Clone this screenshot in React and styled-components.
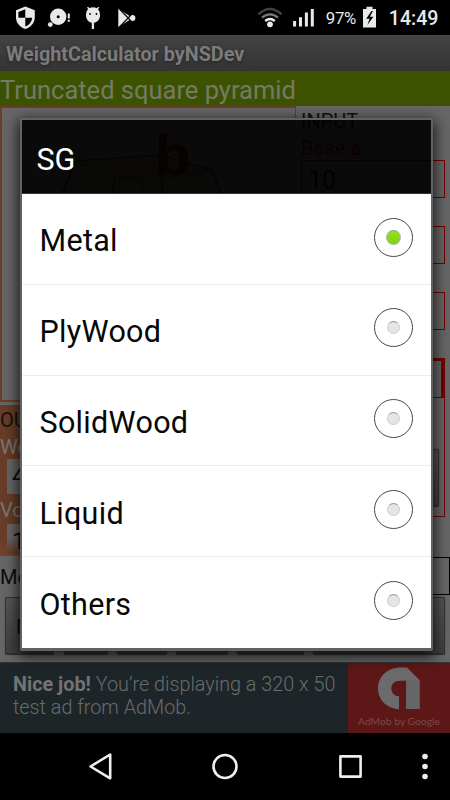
import React from 'react';
import styled, { createGlobalStyle } from 'styled-components';

const GlobalStyle = createGlobalStyle`
  *, *::before, *::after { box-sizing: border-box; }
  body { margin: 0; background: #000; font-family: Roboto, "Noto Sans", sans-serif; }
`;

const Screen = styled.div`
  position: relative;
  display: grid;
  grid-template-rows: 35px 36px 35px 556px 71px 67px;
  width: 450px;
  height: 800px;
  overflow: hidden;
  background: #000;
  white-space: nowrap;
`;

const StatusBar = styled.header`
  display: flex;
  align-items: center;
  justify-content: space-between;
  color: #e9e9e9;
`;

const StatusIcons = styled.svg`
  display: block;
  height: 35px;
  width: ${(p) => p.$width}px;
`;

const StatusGroup = styled.div`
  display: flex;
  align-items: center;
  height: 35px;
  padding-right: ${(p) => p.$end || 0}px;
`;

const Battery = styled.span`
  width: 36px;
  margin-top: 1px;
  font-size: 16.8px;
  letter-spacing: -0.3px;
`;

const Clock = styled.time`
  margin-top: 1px;
  font-size: 19.6px;
  font-weight: 500;
`;

const TitleBar = styled.div`
  padding-left: 6px;
  border-top: 1px solid #484848;
  background: linear-gradient(#424242, #343434);
  color: #7b7b7b;
  font-size: 19.8px;
  font-weight: 700;
  line-height: 37px;
  text-shadow: 0 1px 3px #222;
`;

const ShapeName = styled.h1`
  margin: 0;
  background: #3d5200;
  color: #747a66;
  font-size: 25.5px;
  font-weight: 400;
  line-height: 38px;
`;

const Calculator = styled.main`
  display: grid;
  grid-template-rows: 450px 39px 1fr;
  background: #666;
  color: #0b0b0b;
`;

const Columns = styled.div`
  display: grid;
  grid-template-columns: 296px 144px;
  column-gap: 5px;
`;

const LeftColumn = styled.div`
  display: grid;
  grid-template-rows: 296px 151px;
  row-gap: 3px;
`;

const Figure = styled.div`
  border: 2px solid #6b3e2b;
  border-right-width: 1px;
`;

const Output = styled.section`
  padding-top: 1px;
  background: linear-gradient(#683c28, #683c28 85%, #71432f);
`;

const Caption = styled.div`
  height: ${(p) => p.$height}px;
  color: ${(p) => p.$color || '#111'};
  font-size: 20px;
  line-height: ${(p) => p.$height + (p.$drop || 0)}px;
`;

const OutputValue = styled.div`
  width: 120px;
  height: ${(p) => p.$height}px;
  margin-left: 7px;
  padding-left: 5px;
  overflow: hidden;
  background: ${(p) => (p.$fade ? 'linear-gradient(#666 45%, #683c28)' : '#666')};
  font-size: 24px;
  line-height: 35px;
`;

const InputColumn = styled.section`
  display: flex;
  flex-direction: column;
`;

const Field = styled.div`
  height: 38px;
  margin-bottom: 28px;
  padding-left: 6px;
  border: 1px solid #760000;
  border-width: 1px 1.5px 1px 1px;
  font-size: 25px;
  line-height: 40px;
`;

const Gravity = styled.div`
  height: 159px;
  border: 1px solid #760000;
  border-top: 0;
`;

const SelectedField = styled.div`
  height: 40px;
  border: 3px solid #760000;
  border-bottom-width: 1px;
`;

const Button = styled.div`
  height: ${(p) => p.$height || 58}px;
  width: ${(p) => p.$width}px;
  margin: ${(p) => p.$margin || 0};
  padding-left: 10px;
  border: 1px solid #333;
  border-bottom-width: 2px;
  border-radius: 2px;
  background: linear-gradient(#555, #404040);
  box-shadow: 0 0 1px #333;
  font-size: 21px;
  line-height: 59px;
`;

const MaterialRow = styled.div`
  display: flex;
  justify-content: space-between;
  font-size: 20px;
  line-height: 42px;
`;

const MaterialField = styled.div`
  width: 150px;
  height: 38px;
  margin-top: 1px;
  border: 1px solid #000;
  border-right-width: 2px;
`;

const ButtonRow = styled.div`
  display: flex;
  gap: 9px;
  padding: 2px 6px 0 5px;
`;

const Ad = styled.aside`
  display: grid;
  grid-template-columns: 348px 102px;
  border-top: 1px solid #30383a;
  background: #1e2528;
`;

const AdText = styled.p`
  margin: 0;
  padding: 10px 0 0 13px;
  color: #686c6e;
  font-size: 19.8px;
  font-weight: 300;
  line-height: 23px;
  b { color: #737373; font-weight: 700; }
`;

const AdLogo = styled.div`
  display: flex;
  flex-direction: column;
  align-items: center;
  background: #5d1716;
  color: #7c4948;
  font-family: Lato, sans-serif;
  font-size: 10.3px;
  line-height: 16px;
`;

const LogoMark = styled.svg`
  display: block;
  flex: none;
  width: 102px;
  height: 50px;
`;

const NavBar = styled.svg`
  display: block;
  width: 450px;
  height: 67px;
`;

const Dialog = styled.section`
  position: absolute;
  left: 20px;
  top: 118px;
  width: 413px;
  height: 533px;
  border: 2px solid #626262;
  border-bottom-width: 3px;
  border-radius: 2px;
  box-shadow: 0 4px 14px 2px rgba(0, 0, 0, .75);
`;

const DialogTitle = styled.h2`
  height: 74px;
  margin: 0;
  padding-left: 14.5px;
  border-bottom: 1px solid #343434;
  background: rgba(0, 0, 0, .9);
  color: #fff;
  font-size: 30.5px;
  font-weight: 400;
  line-height: 80px;
`;

const Options = styled.div`
  height: 454px;
  background: #fff;
`;

const Option = styled.div`
  display: flex;
  align-items: center;
  justify-content: space-between;
  height: 90.8px;
  padding: 0 18px 0 17.5px;
  border-bottom: 1px solid #ededed;
  color: #080808;
  font-size: 30.5px;
  letter-spacing: 0.3px;
  line-height: 35px;
  &:last-child { border: 0; }
`;

const OptionLabel = styled.span`
  padding-top: 4px;
`;

const Radio = styled.span`
  display: flex;
  align-items: center;
  justify-content: center;
  width: 39px;
  height: 39px;
  margin-top: -3.5px;
  border: 1.5px solid #484848;
  border-radius: 50%;
  &::after {
    content: '';
    width: ${(p) => (p.$checked ? 15 : 13)}px;
    height: ${(p) => (p.$checked ? 15 : 13)}px;
    border: 1px solid ${(p) => (p.$checked ? '#b1b8a7' : '#ccc')};
    border-top-color: ${(p) => (p.$checked ? '#9aa58c' : '#999')};
    border-radius: 50%;
    background: ${(p) => (p.$checked ? 'linear-gradient(#93e11e, #80d017)' : '#e5e5e5')};
  }
`;

const options = ['Metal', 'PlyWood', 'SolidWood', 'Liquid', 'Others'];

function Pyramid() {
  return (
    <svg width="290" height="290" fill="none" stroke="#1c1916" strokeWidth="1.2">
      <path fill="#665e4e" d="M73 53L158 47 210 62 113 70Z" />
      <path fill="#615c53" d="M73 53L20 190 90 220 113 70M113 70L90 220 260 190 210 62M158 47L165 150" />
      <path d="M140 68L145 150M113 70Q180 72 210 62" stroke="#40372f" />
      <text x="153" y="67" fill="#4a1000" stroke="none" fontSize="58" fontWeight="700" fontFamily="Liberation Sans, sans-serif">b</text>
    </svg>
  );
}

export default function App() {
  return (
    <>
      <GlobalStyle />
      <Screen>
        <StatusBar>
          <StatusIcons $width={150} viewBox="0 0 150 35" fill="#e9e9e9">
            <path d="M25.3 6.5L34.8 10.3V17C34.8 23 30.8 27.3 25.3 29 19.8 27.3 16 23 16 17V10.3Z" />
            <path fill="#000" d="M25.3 9.2V17.8H18.4V12ZM25.3 17.8H32.2C31.7 22 29.2 25.2 25.3 26.6Z" />
            <circle cx="58.2" cy="16.7" r="8.2" /><circle cx="58.2" cy="16.7" r="1.5" fill="#000" />
            <circle cx="50.3" cy="24.6" r="2.4" /><path d="M67.8 13.5h2v5h-2zm0 6.2h2v2h-2z" />
            <path d="M87.5 7.3l3 3M98.8 7.3l-3 3" stroke="#e9e9e9" strokeWidth="1.5" />
            <path d="M86 15.5a7.1 7 0 1 1 14 0c0 4-3 7.4-7 7.4s-7-3.4-7-7.4ZM91.8 22h2.2v7h-2.2z" />
            <circle cx="90" cy="14" r=".9" fill="#000" /><circle cx="96.5" cy="14" r=".9" fill="#000" />
            <path d="M118.3 8.8L131.2 17 135.3 17.8 131.2 19 118.3 27Z" /><circle cx="132.4" cy="17.9" r="3" />
            <path d="M119.5 9L131 21M119.5 27L131 15" stroke="#000" strokeWidth="1.1" />
          </StatusIcons>
          <StatusGroup $end={12.5}>
            <StatusIcons $width={69} viewBox="256 0 69 35" fill="none" stroke="#e9e9e9">
              <path d="M257.5 14.2Q269 3.8 280.5 14.2" stroke="#424242" strokeWidth="2.5" />
              <path d="M261 17.5Q269 10.8 277 17.5" stroke="#777" strokeWidth="2.4" />
              <path d="M264.2 21Q269 17 273.8 21" strokeWidth="2.5" />
              <circle cx="269" cy="24.3" r="2.9" fill="#e9e9e9" stroke="none" />
              <path d="M293.6 21v5.5M299.5 17.2v9.3M305.4 12.5v14M311.3 9v17.5" strokeWidth="3" />
            </StatusIcons>
            <Battery>97%</Battery>
            <StatusIcons $width={27} viewBox="361 0 27 35" fill="#e9e9e9">
              <path d="M362 9h3.5V6.7h6V9h3.5v18.5h-13z" />
              <path fill="#000" d="M370.5 11l-5.3 7.7h3.4l-2.2 6.2 6-8.2h-3.5l3-5.7z" />
            </StatusIcons>
            <Clock>14:49</Clock>
          </StatusGroup>
        </StatusBar>
        <TitleBar>WeightCalculator byNSDev</TitleBar>
        <ShapeName>Truncated square pyramid</ShapeName>
        <Calculator>
          <Columns>
            <LeftColumn>
              <Figure><Pyramid /></Figure>
              <Output>
                <Caption $height={28}>OUTPUT</Caption>
                <Caption $height={25} $drop={2} $color="#777">Weight</Caption>
                <OutputValue $height={35}>4</OutputValue>
                <Caption $height={30} $drop={3} $color="#777">Volume</Caption>
                <OutputValue $height={30} $fade>1</OutputValue>
              </Output>
            </LeftColumn>
            <InputColumn>
              <Caption $height={28} $drop={2}>INPUT</Caption>
              <Caption $height={26} $drop={2} $color="#760000">Base a</Caption>
              <Field>10</Field>
              <Field />
              <Field />
              <Gravity>
                <SelectedField />
                <Button $width={80} $margin="51px 0 0 57px" />
              </Gravity>
            </InputColumn>
          </Columns>
          <MaterialRow>Metal<MaterialField /></MaterialRow>
          <ButtonRow>
            <Button $width={49} $margin="0 1px 0 0">M</Button>
            <Button $width={44} />
            <Button $width={50} />
            <Button $width={52} />
            <Button $width={67} />
            <Button $width={132} />
          </ButtonRow>
        </Calculator>
        <Ad>
          <AdText><b>Nice job!</b> You’re displaying a 320 x 50<br />test ad from AdMob.</AdText>
          <AdLogo>
            <LogoMark viewBox="348 663 102 50">
              <path fill="#6b6b6b" d="M399 709.2C387 708.5 378 700 378 688.5 378 676 388 667.5 401 667.5H407L419.5 680V709H406.3V680.7H400C394.5 680.7 391.3 684 391.3 688.5 391.3 693 394.5 696.2 399 696.2Z" />
              <path fill="#666" d="M406.3 680.7h13.2v28.3h-13.2z" />
            </LogoMark>
            <span>AdMob by Google</span>
          </AdLogo>
        </Ad>
        <NavBar viewBox="0 733 450 67" fill="none" stroke="#eee" strokeWidth="2.6" strokeLinejoin="round">
          <path d="M90.5 766.5L110.2 754.5V778.3Z" />
          <circle cx="225" cy="766.5" r="11.5" />
          <rect x="340.4" y="756.4" width="20.2" height="20.2" />
          <g fill="#eee" stroke="none"><circle cx="425" cy="756.5" r="2.8" /><circle cx="425" cy="766.5" r="2.8" /><circle cx="425" cy="776.5" r="2.8" /></g>
        </NavBar>
        <Dialog>
          <DialogTitle>SG</DialogTitle>
          <Options>
            {options.map((label, i) => (
              <Option key={label}><OptionLabel>{label}</OptionLabel><Radio $checked={i === 0} /></Option>
            ))}
          </Options>
        </Dialog>
      </Screen>
    </>
  );
}
